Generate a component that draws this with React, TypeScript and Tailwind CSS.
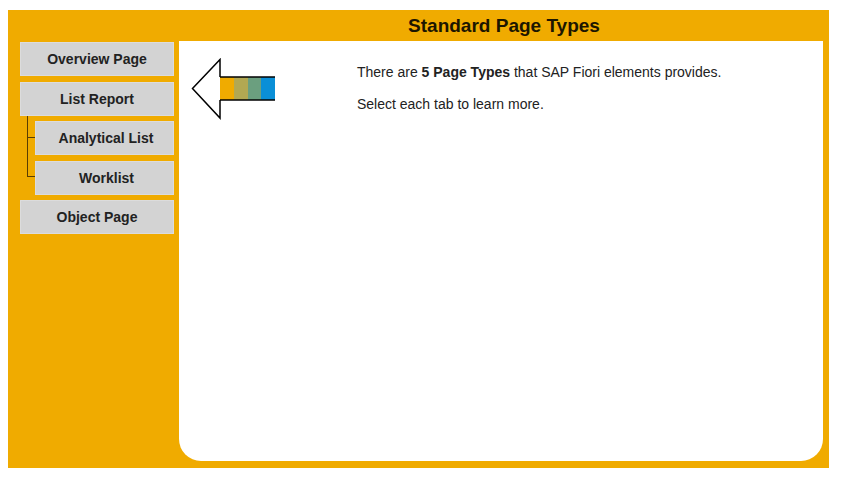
const navBtn =
  'flex h-[34px] items-center justify-center border border-[#dcdcdc] bg-[#d3d3d3] text-[14px] font-bold text-[#222]'

function Arrow() {
  return (
    <svg width="84" height="62" viewBox="0 0 84 62" className="block">
      <rect x="29" y="19" width="14" height="23" fill="#f0ab00" />
      <rect x="43" y="19" width="14" height="23" fill="#b2a852" />
      <rect x="57" y="19" width="13" height="23" fill="#6b9f7f" />
      <rect x="70" y="19" width="14" height="23" fill="#0a8fd7" />
      <line x1="29" y1="19" x2="84" y2="19" stroke="#000" strokeWidth="1.5" />
      <line x1="29" y1="42" x2="84" y2="42" stroke="#000" strokeWidth="1.5" />
      <path d="M29 19 L29 1.5 L1.5 30.5 L29 60 L29 42" fill="none" stroke="#000" strokeWidth="1.5" strokeLinejoin="miter" />
    </svg>
  )
}

export default function App() {
  return (
    <div
      className="h-[482px] w-[849px] bg-white pl-[8px] pt-[10px]"
      style={{ fontFamily: '"Liberation Sans", Arial, sans-serif' }}
    >
      <div className="flex h-[458px] w-[821px] flex-col bg-[#f0ab00]">
        <div className="flex h-[31px] items-center">
          <div className="w-[174px]" />
          <h1 className="w-[644px] text-center text-[19px] font-bold leading-none text-[#1c1600]">
            Standard Page Types
          </h1>
        </div>

        <div className="flex">
          <nav className="flex w-[171px] flex-col pl-[12px] pr-[5px] pt-[1px]">
            <button className={navBtn}>Overview Page</button>
            <button className={`${navBtn} mt-[6px]`}>List Report</button>
            <div className="relative flex flex-col pl-[15px]">
              <span className="absolute left-[7px] top-0 h-[61px] w-px bg-[#5a3d00]" />
              <span className="absolute left-[7px] top-[21px] h-px w-[8px] bg-[#5a3d00]" />
              <span className="absolute left-[7px] top-[60px] h-px w-[8px] bg-[#5a3d00]" />
              <button className={`${navBtn} mt-[5px] pl-[3px]`}>Analytical List</button>
              <button className={`${navBtn} mt-[6px] pl-[4px]`}>Worklist</button>
            </div>
            <button className={`${navBtn} mt-[5px]`}>Object Page</button>
          </nav>

          <main className="flex h-[420px] w-[644px] rounded-b-[22px] bg-white">
            <div className="ml-[12px] mt-[17px]">
              <Arrow />
            </div>
            <div className="ml-[82px] pt-[23px] text-[14px] leading-[16px] text-[#222]">
              <p>
                There are <b>5 Page Types</b> that SAP Fiori elements provides.
              </p>
              <p className="mt-[16px]">Select each tab to learn more.</p>
            </div>
          </main>
        </div>
      </div>
    </div>
  )
}
